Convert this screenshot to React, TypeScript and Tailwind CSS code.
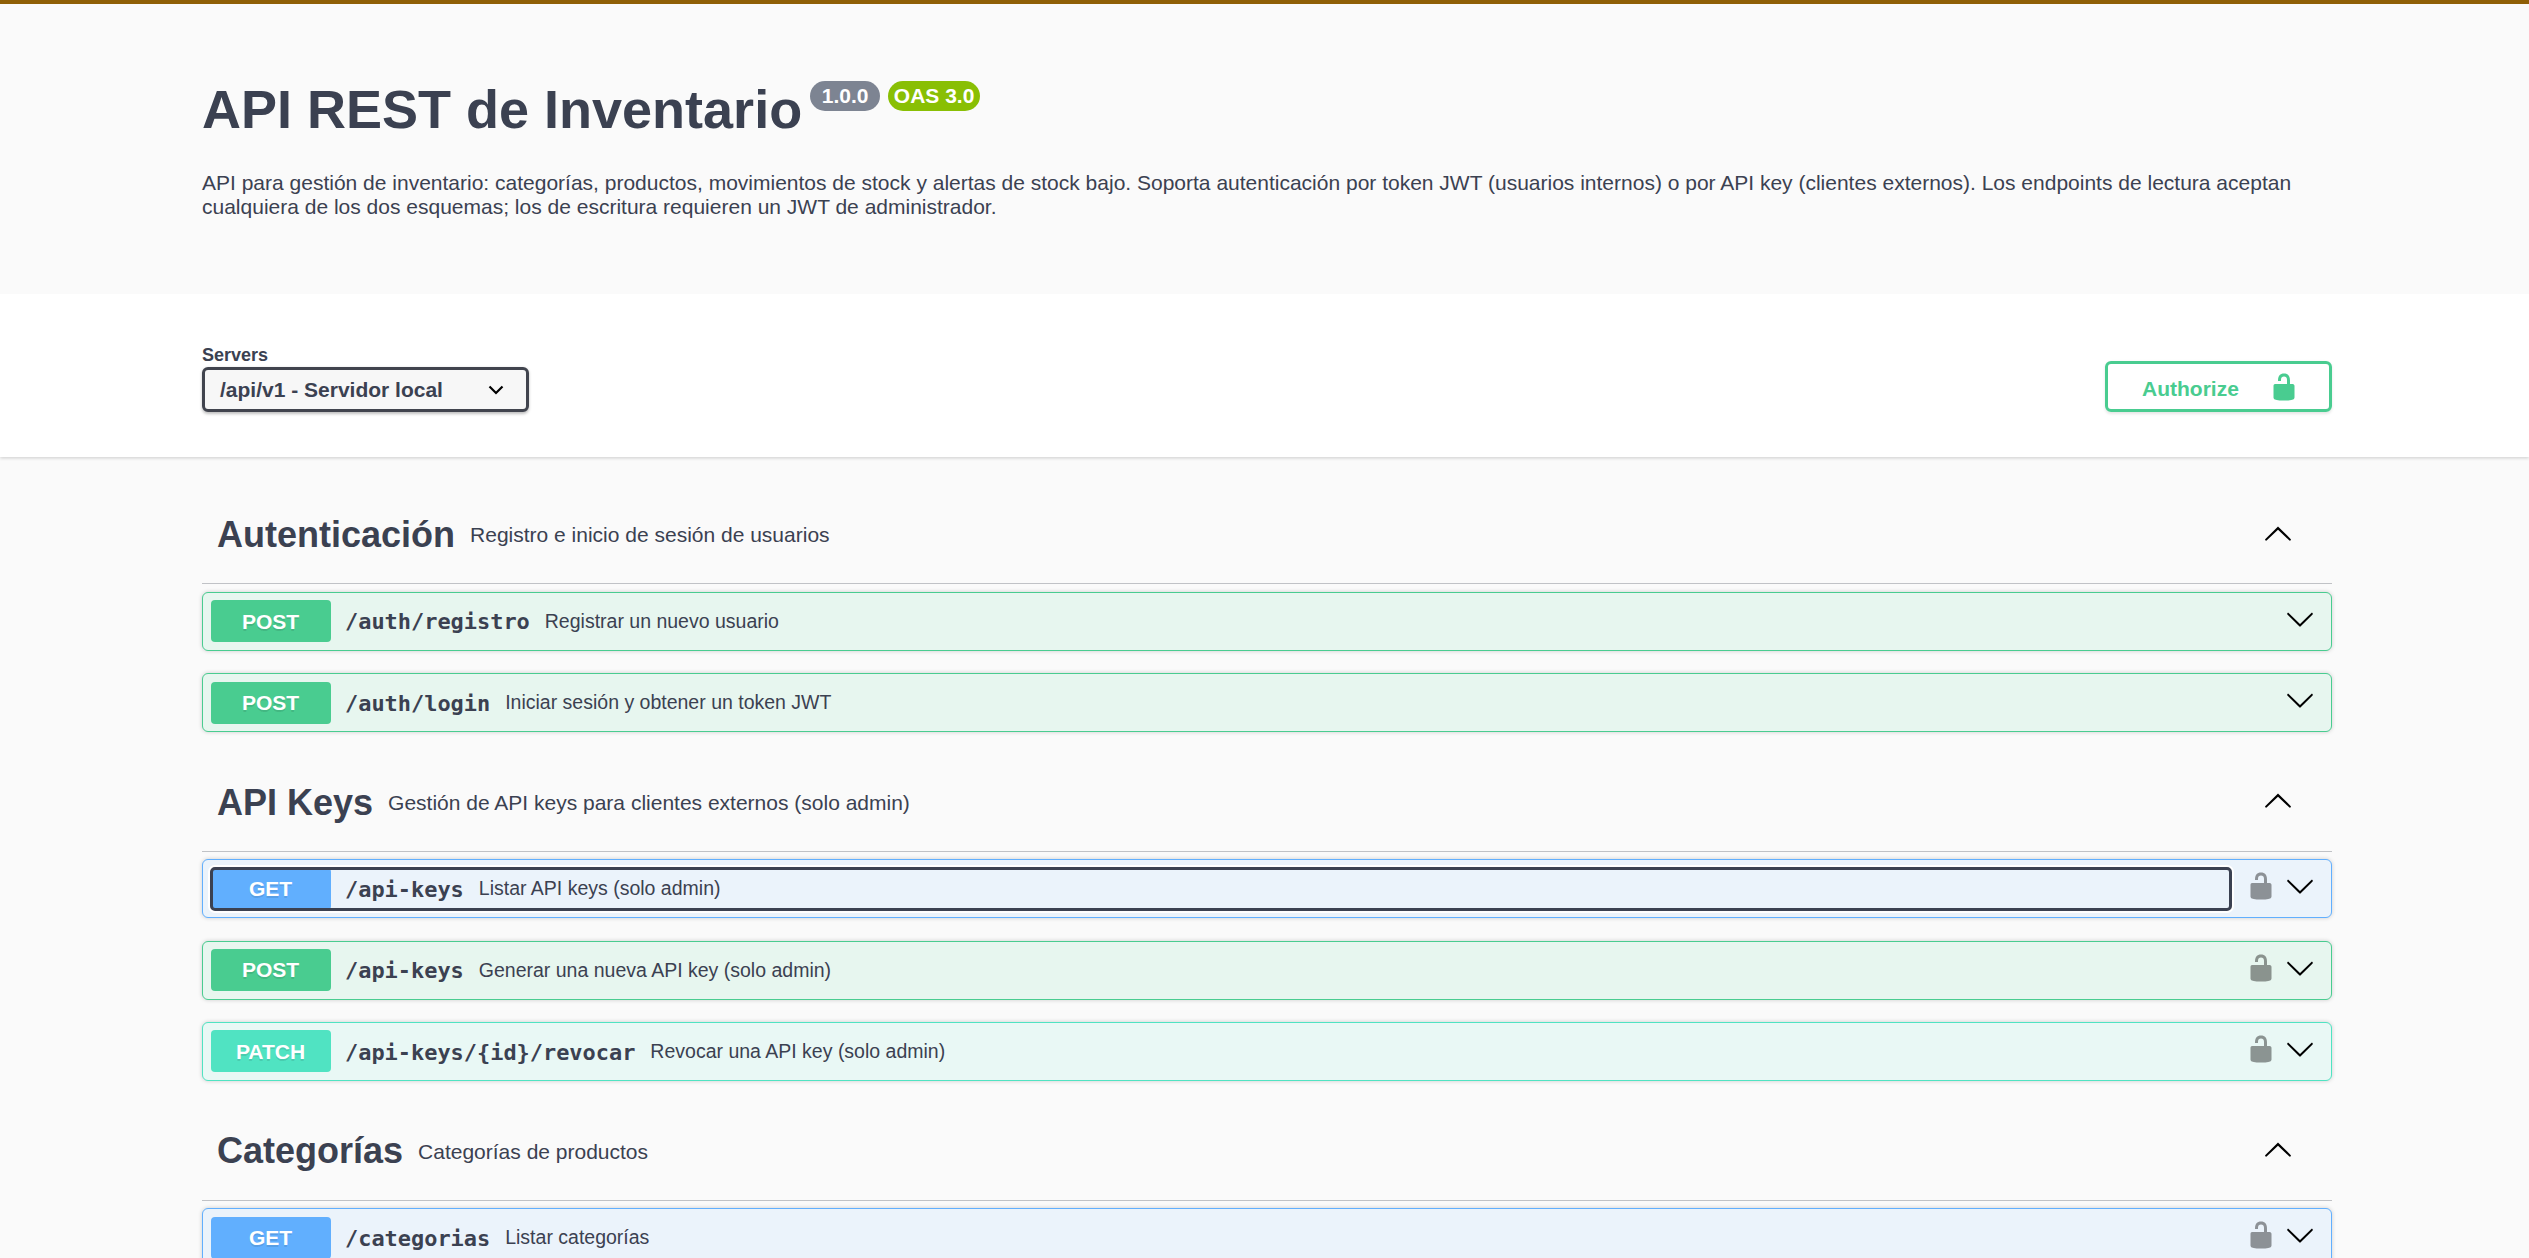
import React from 'react';

type Method = 'GET' | 'POST' | 'PATCH';

interface Operation {
  method: Method;
  path: string;
  summary: string;
  locked?: boolean;
  focused?: boolean;
}

interface Tag {
  name: string;
  description: string;
  operations: Operation[];
}

const TAGS: Tag[] = [
  {
    name: 'Autenticación',
    description: 'Registro e inicio de sesión de usuarios',
    operations: [
      { method: 'POST', path: '/auth/registro', summary: 'Registrar un nuevo usuario' },
      { method: 'POST', path: '/auth/login', summary: 'Iniciar sesión y obtener un token JWT' },
    ],
  },
  {
    name: 'API Keys',
    description: 'Gestión de API keys para clientes externos (solo admin)',
    operations: [
      { method: 'GET', path: '/api-keys', summary: 'Listar API keys (solo admin)', locked: true, focused: true },
      { method: 'POST', path: '/api-keys', summary: 'Generar una nueva API key (solo admin)', locked: true },
      { method: 'PATCH', path: '/api-keys/{id}/revocar', summary: 'Revocar una API key (solo admin)', locked: true },
    ],
  },
  {
    name: 'Categorías',
    description: 'Categorías de productos',
    operations: [
      { method: 'GET', path: '/categorias', summary: 'Listar categorías', locked: true },
    ],
  },
];

const METHOD_STYLES: Record<Method, { row: string; badge: string }> = {
  GET: { row: 'border-[#61affe] bg-[#ebf3fb]', badge: 'bg-[#61affe]' },
  POST: { row: 'border-[#49cc90] bg-[#e7f6ef]', badge: 'bg-[#49cc90]' },
  PATCH: { row: 'border-[#50e3c2] bg-[#e9f8f5]', badge: 'bg-[#50e3c2]' },
};

const UnlockedIcon = ({ className }: { className?: string }) => (
  <svg viewBox="0 0 20 20" width="30" height="30" fill="currentColor" className={className}>
    <path d="M15.8 8H14V5.6C14 2.703 12.665 1 10 1 7.334 1 6 2.703 6 5.6V6h2v-.801C8 3.754 8.797 3 10 3c1.203 0 2 .754 2 2.199V8H4c-.553 0-1 .646-1 1.199V17c0 .549.428 1.139.951 1.307l1.197.387C5.672 18.861 6.55 19 7.1 19h5.8c.549 0 1.428-.139 1.951-.307l1.196-.387c.524-.167.953-.757.953-1.306V9.199C17 8.646 16.352 8 15.8 8z" />
  </svg>
);

const ArrowUp = ({ className }: { className?: string }) => (
  <svg viewBox="0 0 20 20" width="30" height="30" className={className}>
    <path d="M17.418 14.908c.272.268.709.268.979 0s.271-.701 0-.969l-7.908-7.83c-.27-.268-.707-.268-.979 0l-7.908 7.83c-.27.268-.271.701 0 .969.271.268.709.268.979 0L10 7.767l7.418 7.141z" />
  </svg>
);

const ArrowDown = ({ className }: { className?: string }) => (
  <svg viewBox="0 0 20 20" width="30" height="30" className={className}>
    <path d="M17.418 6.109c.272-.268.709-.268.979 0s.271.701 0 .969l-7.908 7.83c-.27.268-.707.268-.979 0l-7.908-7.83c-.27-.268-.271-.701 0-.969.271-.268.709-.268.979 0L10 13.25l7.418-7.141z" />
  </svg>
);

const OperationRow = ({ operation }: { operation: Operation }) => {
  const { method, path, summary, locked, focused } = operation;
  const styles = METHOD_STYLES[method];

  return (
    <div
      className={`mb-[22.33px] flex h-[59px] items-start rounded-[6px] border pt-[7.5px] pr-[16px] pl-[8px] shadow-[0_0_4.5px_rgba(0,0,0,0.19)] ${styles.row}`}
    >
      <button
        className={`flex h-[42px] flex-1 items-center rounded-[4px] text-left ${
          focused ? 'outline-3 -outline-offset-2 outline-[#3b4151] shadow-[0_0_0_3px_white]' : ''
        }`}
      >
        <span
          className={`flex h-[42px] w-[120px] items-center justify-center rounded-[4px] pr-px text-[21px] font-bold text-white [text-shadow:0_1.5px_0_rgba(0,0,0,0.1)] ${styles.badge}`}
        >
          {method}
        </span>
        <span className="pt-[3px] pr-[15px] pl-[14px] font-['DejaVu_Sans_Mono',monospace] text-[21.93px] font-bold">
          {path}
        </span>
        <span className="text-[19.5px]">{summary}</span>
      </button>
      {locked && <UnlockedIcon className="mt-[3.500px] ml-[15px] text-black opacity-40" />}
      <ArrowDown className={locked ? 'mt-[3.500px] ml-[9px]' : 'mt-[3.500px]'} />
    </div>
  );
};

const TagSection = ({ tag }: { tag: Tag }) => (
  <section>
    <div className="mb-[7.5px] flex h-[97.33px] items-center border-b border-[rgba(59,65,81,0.3)] pr-[39px] pl-[15px]">
      <h3 className="text-[36px] leading-none font-bold">{tag.name}</h3>
      <p className="flex-1 px-[15px] text-[21px]">{tag.description}</p>
      <ArrowUp className="-mt-[5px]" />
    </div>
    {tag.operations.map((operation) => (
      <OperationRow key={operation.method + operation.path} operation={operation} />
    ))}
  </section>
);

export default function App() {
  return (
    <div className="h-[1258px] overflow-hidden bg-[#fafafa] font-['Liberation_Sans',Arial,sans-serif] text-[#3b4151]">
      <div className="h-1 bg-[#8f5f06]" />

      {/* API info */}
      <header className="h-[290px] pt-[74px] pr-[197px] pl-[202px]">
        <div className="flex items-start">
          <h2 className="text-[54px] leading-[62px] font-bold">API REST de Inventario</h2>
          <span className="mt-[3px] ml-[8px] flex h-[30px] w-[70px] items-center justify-center rounded-full bg-[#7d8492] text-[21px] font-bold text-white">
            1.0.0
          </span>
          <span className="mt-[3px] ml-[8px] flex h-[30px] w-[92px] items-center justify-center rounded-full bg-[#89bf04] text-[21px] font-bold whitespace-nowrap text-white">
            OAS 3.0
          </span>
        </div>
        <p className="mt-[31px] text-[21px] leading-[24px]">
          API para gestión de inventario: categorías, productos, movimientos de stock y alertas de stock bajo. Soporta
          autenticación por token JWT (usuarios internos) o por API key (clientes externos). Los endpoints de lectura
          aceptan cualquiera de los dos esquemas; los de escritura requieren un JWT de administrador.
        </p>
      </header>

      {/* Servers and authorization */}
      <div className="flex h-[163px] items-end justify-between bg-white pr-[197px] pb-[45px] pl-[202px] shadow-[0_1.5px_3px_rgba(0,0,0,0.15)]">
        <div>
          <div className="text-[18px] leading-[22px] font-bold">Servers</div>
          <button className="mt-[1px] flex h-[45px] w-[327px] items-center justify-between rounded-[6px] border-3 border-[#41444e] bg-[#f7f7f7] pr-[22px] pl-[15px] text-[21px] font-bold shadow-[0_1.5px_3px_rgba(0,0,0,0.25)]">
            /api/v1 - Servidor local
            <svg width="16" height="10" viewBox="0 0 16 10" fill="none" stroke="black" strokeWidth="2.2">
              <path d="M1.5 1.5 8 8l6.5-6.5" />
            </svg>
          </button>
        </div>
        <button className="flex h-[51px] w-[227px] items-center justify-between rounded-[6px] border-3 border-[#49cc90] pr-[30px] pl-[34px] text-[21px] font-bold text-[#49cc90] shadow-[0_1.5px_3px_rgba(0,0,0,0.1)]">
          <span className="pt-[5px]">Authorize</span>
          <UnlockedIcon />
        </button>
      </div>

      {/* Operations grouped by tag */}
      <main className="pt-[30px] pr-[197px] pl-[202px]">
        {TAGS.map((tag) => (
          <TagSection key={tag.name} tag={tag} />
        ))}
      </main>
    </div>
  );
}
